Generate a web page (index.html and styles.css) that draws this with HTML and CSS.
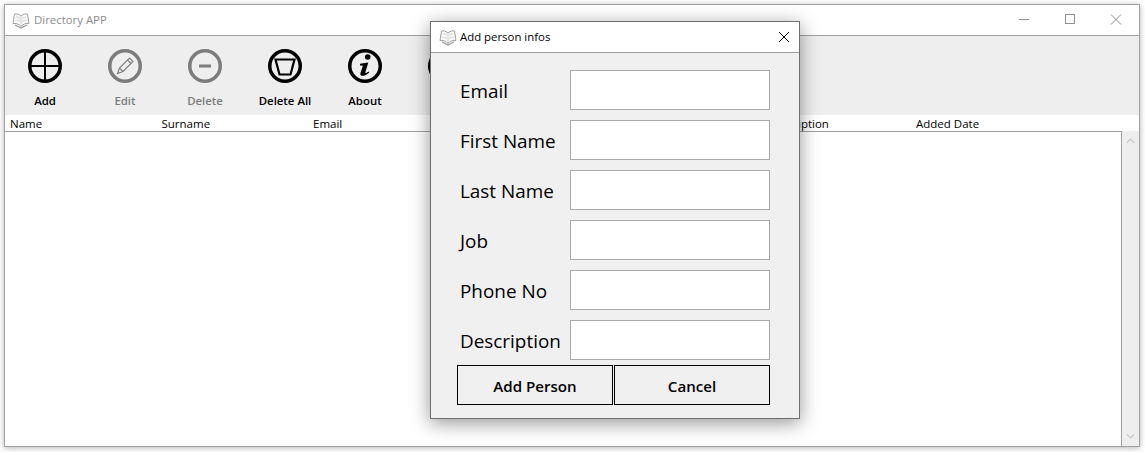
FILE: index.html
```html
<!DOCTYPE html>
<html lang="en">
<head>
  <meta charset="UTF-8">
  <meta name="viewport" content="width=device-width, initial-scale=1.0">
  <title>Directory APP</title>
  <link rel="stylesheet" href="styles.css">
</head>
<body>
  <svg class="defs" width="0" height="0">
    <symbol id="book" viewBox="0 0 18 18">
      <path d="M9 5C7 3 4 2.500 2.500 3L1 12.500C3.500 12 7 13 9 15.500C11 13 14.500 12 17 12.500L15.500 3C14 2.500 11 3 9 5Z" fill="#f8f8f8" stroke="#a0a0a0"/>
      <path d="M9 5V15.500M4 6C5.500 6 7 6.500 8 7.500M14 6C12.500 6 11 6.500 10 7.500M3.500 9C5 9 7 9.500 8 10.500M14.500 9C13 9 11 9.500 10 10.500" fill="none" stroke="#c4c4c4" stroke-width=".7"/>
      <path d="M3 14L9 17L15 14" fill="none" stroke="#9a9a9a" stroke-width="1.200"/>
    </symbol>
  </svg>

  <div class="window">
    <div class="titlebar">
      <svg class="app-icon"><use href="#book"/></svg>
      <span class="title">Directory APP</span>
      <div class="win-controls">
        <svg class="win-btn" viewBox="0 0 46 30"><path d="M18 14.500H28"/></svg>
        <svg class="win-btn" viewBox="0 0 46 30"><rect x="18.500" y="9.500" width="9" height="9"/></svg>
        <svg class="win-btn" viewBox="0 0 46 30"><path d="M18 9.500L28 19.500M28 9.500L18 19.500"/></svg>
      </div>
    </div>

    <div class="toolbar">
      <div class="tool">
        <svg class="tool-icon" viewBox="0 0 34 34"><circle cx="17" cy="17" r="15.250"/><path d="M17 3V31M3 17H31" stroke-width="2"/></svg>
        <span>Add</span>
      </div>
      <div class="tool disabled">
        <svg class="tool-icon" viewBox="0 0 34 34"><circle cx="17" cy="17" r="15.250"/><path d="M9.500 24.500L11.500 19L21.500 9L25 12.500L15 22.500ZM19.500 11L23 14.500M11.500 19L15 22.500" stroke-width="1.100"/></svg>
        <span>Edit</span>
      </div>
      <div class="tool disabled">
        <svg class="tool-icon" viewBox="0 0 34 34"><circle cx="17" cy="17" r="15.250"/><path d="M11 17H23" stroke-width="3"/></svg>
        <span>Delete</span>
      </div>
      <div class="tool">
        <svg class="tool-icon" viewBox="0 0 34 34"><circle cx="17" cy="17" r="15.250"/><path d="M7.500 10.500H26.500L22.500 25.500H11.500Z" stroke-width="2.200"/></svg>
        <span>Delete All</span>
      </div>
      <div class="tool">
        <svg class="tool-icon" viewBox="0 0 34 34"><circle cx="17" cy="17" r="15.250"/><circle class="solid" cx="19.700" cy="8" r="2.800"/><path class="solid" d="M12 14.800L20.300 13.500L17.400 23.300C17.100 24.300 18 24.500 20.400 22.400L21.300 23.500C18.300 26.300 15.500 27.200 13.400 26.700C12.200 26.300 12.200 25 12.500 24L14.700 17.300C14.900 16.500 14 16.300 12 16.500Z"/></svg>
        <span>About</span>
      </div>
      <div class="tool">
        <svg class="tool-icon" viewBox="0 0 34 34"><circle cx="17" cy="17" r="15.250"/></svg>
        <span>Close</span>
      </div>
    </div>

    <div class="columns">
      <span>Name</span>
      <span>Surname</span>
      <span>Email</span>
      <span></span>
      <span>Phone No</span>
      <span>Description</span>
      <span>Added Date</span>
    </div>

    <div class="list-area">
      <div class="list"></div>
      <div class="scrollbar">
        <svg class="arrow" viewBox="0 0 10 6"><path d="M1 5L5 1L9 5"/></svg>
        <svg class="arrow" viewBox="0 0 10 6"><path d="M1 1L5 5L9 1"/></svg>
      </div>
    </div>
  </div>

  <div class="dialog">
    <div class="dialog-title">
      <svg class="app-icon"><use href="#book"/></svg>
      <span class="dialog-caption">Add person infos</span>
      <svg class="dialog-close" viewBox="0 0 12 12"><path d="M1 1L11 11M11 1L1 11"/></svg>
    </div>
    <div class="dialog-body">
      <div class="field"><label>Email</label><input type="text"></div>
      <div class="field"><label>First Name</label><input type="text"></div>
      <div class="field"><label>Last Name</label><input type="text"></div>
      <div class="field"><label>Job</label><input type="text"></div>
      <div class="field"><label>Phone No</label><input type="text"></div>
      <div class="field"><label>Description</label><input type="text"></div>
      <div class="buttons">
        <button>Add Person</button>
        <button>Cancel</button>
      </div>
    </div>
  </div>
</body>
</html>
```

FILE: styles.css
```css
* {
  box-sizing: border-box;
}

html, body {
  height: 100%;
}

body {
  margin: 0;
  padding: 4px 5px 5px 4px;
  background-color: #fff;
  font-family: "Open Sans", "Noto Sans", sans-serif;
  overflow: hidden;
}

.defs {
  position: absolute;
}

.window {
  height: 443px;
  display: flex;
  flex-direction: column;
  border: 1px solid #a0a0a0;
  background-color: #fff;
  box-shadow: 0 1px 6px rgba(0, 0, 0, 0.3);
}

.titlebar {
  height: 31px;
  flex: none;
  display: flex;
  align-items: center;
  padding-left: 7px;
  border-bottom: 1px solid #a0a0a0;
}

.app-icon {
  width: 18px;
  height: 18px;
  flex: none;
}

.title {
  margin-left: 4px;
  padding-bottom: 2px;
  font-size: 11.400px;
  color: #8c8c8c;
}

.win-controls {
  margin-left: auto;
  display: flex;
}

.win-btn {
  width: 46px;
  height: 30px;
  fill: none;
  stroke: #8f8f8f;
}

.toolbar {
  height: 79px;
  flex: none;
  display: flex;
  background-color: #eee;
}

.tool {
  width: 80px;
  display: flex;
  flex-direction: column;
  align-items: center;
  padding-top: 13px;
  font-size: 11.400px;
  font-weight: 600;
  color: #000;
}

.tool span {
  margin-top: 10px;
}

.tool-icon {
  width: 34px;
  height: 34px;
  fill: none;
  stroke: #000;
  stroke-width: 3.500;
}

.tool-icon .solid {
  fill: #000;
  stroke: none;
}

.tool.disabled {
  color: #7c7c7c;
}

.tool.disabled .tool-icon {
  stroke: #7c7c7c;
}

.columns {
  height: 16px;
  flex: none;
  display: grid;
  grid-template-columns: 151.500px 151.500px 151.500px 151.500px 151.500px 148.500px 1fr;
  padding-left: 5px;
  font-size: 11.500px;
  line-height: 17px;
  color: #000;
}

.list-area {
  flex: 1;
  display: flex;
  min-height: 0;
}

.list {
  flex: 1;
  border-top: 1px solid #a0a0a0;
  border-right: 1px solid #a0a0a0;
  background-color: #fff;
}

.scrollbar {
  width: 17px;
  flex: none;
  display: flex;
  flex-direction: column;
  justify-content: space-between;
  align-items: center;
  padding: 7px 0;
  background-color: #eee;
}

.arrow {
  width: 9px;
  height: 6px;
  fill: none;
  stroke: #c4c4c4;
  stroke-width: 1.300;
}

.dialog {
  position: absolute;
  left: 430px;
  top: 21px;
  width: 370px;
  height: 398px;
  display: flex;
  flex-direction: column;
  border: 1px solid #6e6e6e;
  background-color: #f0f0f0;
  box-shadow: 0 4px 18px rgba(0, 0, 0, 0.42);
}

.dialog-title {
  height: 31px;
  flex: none;
  display: flex;
  align-items: center;
  padding-left: 8px;
  background-color: #fff;
  border-bottom: 1px solid #a0a0a0;
}

.dialog-caption {
  margin-left: 3px;
  padding-bottom: 1px;
  font-size: 11.400px;
  color: #000;
}

.dialog-close {
  width: 12px;
  height: 12px;
  margin-left: auto;
  margin-right: 9px;
  fill: none;
  stroke: #000;
}

.dialog-body {
  flex: 1;
  display: flex;
  flex-direction: column;
  gap: 10px;
  padding: 17px 29px 0 26px;
}

.field {
  height: 40px;
  display: flex;
  justify-content: space-between;
  align-items: center;
  padding-left: 3px;
}

.field label {
  padding-top: 2px;
  font-size: 18.900px;
  line-height: 20px;
  color: #000;
}

.field input {
  width: 200px;
  height: 40px;
  border: 1px solid #a9a9a9;
  background-color: #fff;
  outline: none;
}

.buttons {
  display: flex;
  gap: 1px;
  margin-top: -5px;
}

.buttons button {
  flex: 1;
  height: 40px;
  padding-top: 3px;
  border: 1px solid #000;
  background-color: #f0f0f0;
  font-family: inherit;
  font-size: 15.100px;
  font-weight: 600;
  color: #000;
}
```
